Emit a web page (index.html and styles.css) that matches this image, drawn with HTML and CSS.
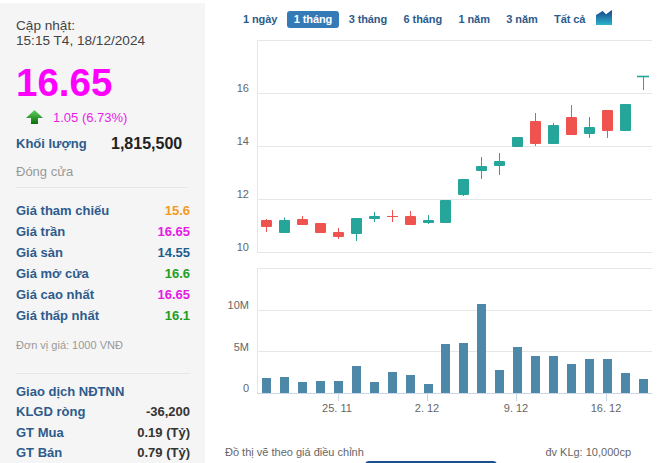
FILE: index.html
```html
<!DOCTYPE html>
<html lang="vi">
<head>
<meta charset="utf-8">
<title>16.65</title>
<link rel="stylesheet" href="styles.css">
</head>
<body>
<div class="page">
  <aside class="side">
    <div class="upd">Cập nhật:<br>15:15 T4, 18/12/2024</div>
    <div class="price">16.65</div>
    <div class="change">
      <svg class="arrow" width="17" height="14" viewBox="0 0 17 14">
        <defs>
          <linearGradient id="ga" x1="0" y1="0" x2="0" y2="1">
            <stop offset="0" stop-color="#5fd35f"/>
            <stop offset="1" stop-color="#0a6e0a"/>
          </linearGradient>
        </defs>
        <polygon points="8.5,0 17,8 12,8 12,14 5,14 5,8 0,8" fill="url(#ga)"/>
      </svg>
      <span>1.05 (6.73%)</span>
    </div>
    <div class="vol"><span class="lbl vol-lbl">Khối lượng</span><span class="vol-val">1,815,500</span></div>
    <div class="closed">Đóng cửa</div>
    <div class="sep sep1"></div>
    <ul class="rows">
      <li><span class="lbl">Giá tham chiếu</span><span class="v ref">15.6</span></li>
      <li><span class="lbl">Giá trần</span><span class="v ceil">16.65</span></li>
      <li><span class="lbl">Giá sàn</span><span class="v floor">14.55</span></li>
      <li><span class="lbl">Giá mở cửa</span><span class="v up">16.6</span></li>
      <li><span class="lbl">Giá cao nhất</span><span class="v ceil">16.65</span></li>
      <li><span class="lbl">Giá thấp nhất</span><span class="v up">16.1</span></li>
    </ul>
    <div class="unit">Đơn vị giá: 1000 VNĐ</div>
    <div class="sep sep2"></div>
    <ul class="rows rows2">
      <li><span class="lbl">Giao dịch NĐTNN</span></li>
      <li><span class="lbl">KLGD ròng</span><span class="v dark">-36,200</span></li>
      <li><span class="lbl">GT Mua</span><span class="v dark">0.19 (Tỷ)</span></li>
      <li><span class="lbl">GT Bán</span><span class="v dark">0.79 (Tỷ)</span></li>
    </ul>
  </aside>

  <main class="main">
    <nav class="tabs">
      <span class="tab">1 ngày</span>
      <span class="tab active">1 tháng</span>
      <span class="tab">3 tháng</span>
      <span class="tab">6 tháng</span>
      <span class="tab">1 năm</span>
      <span class="tab">3 năm</span>
      <span class="tab">Tất cả</span>
      <svg class="area-icon" width="16" height="15" viewBox="0 0 16 15">
        <defs>
          <linearGradient id="gi" x1="0" y1="0" x2="0" y2="1">
            <stop offset="0" stop-color="#1c3d88"/>
            <stop offset="0.35" stop-color="#1f6aa2"/>
            <stop offset="1" stop-color="#2bb6c9"/>
          </linearGradient>
        </defs>
        <polygon points="0,5 6.7,1 10,4.3 16,0 16,15 0,15" fill="url(#gi)"/>
      </svg>
    </nav>

    <svg class="chart" width="453" height="400" viewBox="205 38 453 400">
      <g class="grid">
        <line x1="257" y1="40.5" x2="652" y2="40.5"/>
        <line x1="257" y1="93.5" x2="652" y2="93.5"/>
        <line x1="257" y1="146.5" x2="652" y2="146.5"/>
        <line x1="257" y1="199.5" x2="652" y2="199.5"/>
        <line x1="257" y1="252.5" x2="652" y2="252.5"/>
        <line x1="257.5" y1="40" x2="257.5" y2="253"/>
        <line x1="257" y1="268.5" x2="652" y2="268.5"/>
        <line x1="257" y1="310.5" x2="652" y2="310.5"/>
        <line x1="257" y1="351.5" x2="652" y2="351.5"/>
        <line x1="257.5" y1="268" x2="257.5" y2="393"/>
      </g>
      <g class="axis">
        <line x1="257" y1="393.5" x2="652" y2="393.5"/>
        <line x1="338.5" y1="393" x2="338.5" y2="401"/>
        <line x1="427.5" y1="393" x2="427.5" y2="401"/>
        <line x1="516.5" y1="393" x2="516.5" y2="401"/>
        <line x1="606.5" y1="393" x2="606.5" y2="401"/>
      </g>
      <g class="ylab">
        <text x="249" y="91.5">16</text>
        <text x="249" y="144.5">14</text>
        <text x="249" y="197.5">12</text>
        <text x="249" y="250.5">10</text>
        <text x="249" y="309">10M</text>
        <text x="249" y="350.5">5M</text>
        <text x="249" y="392">0</text>
      </g>
      <g class="xlab">
        <text x="337" y="412">25. 11</text>
        <text x="427" y="412">2. 12</text>
        <text x="516" y="412">9. 12</text>
        <text x="606" y="412">16. 12</text>
      </g>

      <g class="dn">
        <line x1="266.5" y1="219" x2="266.5" y2="232"/><rect x="261" y="220" width="11" height="7" rx="1"/>
        <line x1="302.5" y1="216" x2="302.5" y2="225"/><rect x="297" y="219" width="11" height="6" rx="1"/>
        <rect x="315" y="223" width="11" height="10" rx="1"/>
        <line x1="338.5" y1="228" x2="338.5" y2="239"/><rect x="333" y="232" width="11" height="5" rx="1"/>
        <line x1="392.5" y1="210" x2="392.5" y2="222"/><line x1="387" y1="216.5" x2="398" y2="216.5"/>
        <line x1="410.5" y1="211" x2="410.5" y2="225"/><rect x="405" y="216" width="11" height="9" rx="1"/>
        <line x1="535.5" y1="113" x2="535.5" y2="146"/><rect x="530" y="121" width="11" height="23" rx="1"/>
        <line x1="571.5" y1="105" x2="571.5" y2="135"/><rect x="566" y="117" width="11" height="18" rx="1"/>
        <line x1="607.5" y1="110" x2="607.5" y2="138"/><rect x="602" y="110" width="11" height="21" rx="1"/>
      </g>
      <g class="upc">
        <line x1="284.5" y1="217.5" x2="284.5" y2="233"/><rect x="279" y="220" width="11" height="13" rx="1"/>
        <line x1="356.5" y1="218" x2="356.5" y2="241"/><rect x="351" y="218" width="11" height="16" rx="1"/>
        <line x1="374.5" y1="212" x2="374.5" y2="222"/><rect x="369" y="216" width="11" height="3" rx="1"/>
        <line x1="428.5" y1="215" x2="428.5" y2="224"/><rect x="423" y="220" width="11" height="3" rx="1"/>
        <rect x="440" y="200" width="11" height="23" rx="1"/>
        <line x1="463.5" y1="179" x2="463.5" y2="196"/><rect x="458" y="179" width="11" height="16" rx="1"/>
        <line x1="481.5" y1="157" x2="481.5" y2="179"/><rect x="476" y="166" width="11" height="5" rx="1"/>
        <line x1="499.5" y1="153" x2="499.5" y2="175"/><rect x="494" y="161" width="11" height="5" rx="1"/>
        <rect x="512" y="137" width="11" height="10" rx="1"/>
        <line x1="553.5" y1="123" x2="553.5" y2="144"/><rect x="548" y="125" width="11" height="19" rx="1"/>
        <line x1="589.5" y1="117" x2="589.5" y2="138"/><rect x="584" y="127" width="11" height="7" rx="1"/>
        <rect x="620" y="104" width="11" height="27" rx="1"/>
        <line x1="643.5" y1="77" x2="643.5" y2="90"/><line class="thick" x1="637" y1="76.5" x2="649" y2="76.5"/>
      </g>

      <g class="bars">
        <rect x="262" y="378" width="9" height="15"/>
        <rect x="280" y="377" width="9" height="16"/>
        <rect x="298" y="382" width="9" height="11"/>
        <rect x="316" y="381" width="9" height="12"/>
        <rect x="334" y="381" width="9" height="12"/>
        <rect x="352" y="366" width="9" height="27"/>
        <rect x="370" y="382" width="9" height="11"/>
        <rect x="388" y="372" width="9" height="21"/>
        <rect x="406" y="375" width="9" height="18"/>
        <rect x="424" y="384" width="9" height="9"/>
        <rect x="441" y="344" width="9" height="49"/>
        <rect x="459" y="343" width="9" height="50"/>
        <rect x="477" y="304" width="9" height="89"/>
        <rect x="495" y="370" width="9" height="23"/>
        <rect x="513" y="347" width="9" height="46"/>
        <rect x="531" y="356" width="9" height="37"/>
        <rect x="549" y="356" width="9" height="37"/>
        <rect x="567" y="364" width="9" height="29"/>
        <rect x="585" y="359" width="9" height="34"/>
        <rect x="603" y="359" width="9" height="34"/>
        <rect x="621" y="373" width="9" height="20"/>
        <rect x="639" y="379" width="9" height="14"/>
      </g>
    </svg>

    <div class="foot"><span>Đồ thị vẽ theo giá điều chỉnh</span><span>đv KLg: 10,000cp</span></div>
    <div class="btn"></div>
  </main>
</div>
</body>
</html>
```

FILE: styles.css
```css
html, body {
  margin: 0;
  padding: 0;
  background: #ffffff;
  width: 658px;
  height: 463px;
  overflow: hidden;
  font-family: "Liberation Sans", Arial, sans-serif;
}

.page {
  display: flex;
  height: 463px;
}

/* ---------- left panel ---------- */
.side {
  width: 205px;
  flex: none;
  box-sizing: border-box;
  margin-top: 3px;
  height: 460px;
  padding: 14.5px 15px 0 16px;
  background: #f5f5f5;
}

.upd {
  font-size: 13.6px;
  line-height: 15px;
  color: #444;
}

.price {
  margin-top: 13.5px;
  font-size: 38.5px;
  line-height: 44px;
  font-weight: bold;
  color: #ff00ff;
}

.change {
  margin-top: 4px;
  height: 16px;
  display: flex;
  align-items: center;
  padding-left: 10px;
  gap: 10px;
  font-size: 13px;
  color: #e81ee8;
}

.arrow {
  display: block;
}

.vol {
  margin-top: 10px;
  display: flex;
  align-items: center;
  line-height: 18px;
}

.vol-lbl {
  width: 95px;
}

.vol-val {
  font-size: 16px;
  font-weight: bold;
  color: #222;
}

.lbl {
  font-size: 13px;
  font-weight: bold;
  color: #2d5b8c;
}

.closed {
  margin-top: 11px;
  font-size: 13px;
  line-height: 16px;
  color: #999;
}

.sep {
  height: 1px;
  background: #e6e6e6;
}

.sep1 {
  margin-top: 6.5px;
  margin-right: 3px;
}

.rows {
  list-style: none;
  margin: 12.7px 0 0;
  padding: 0;
}

.rows li {
  display: flex;
  justify-content: space-between;
  align-items: center;
  height: 21px;
}

.v {
  font-size: 13px;
  font-weight: bold;
}

.ref { color: #f39a1e; }
.ceil { color: #e619e6; }
.floor { color: #1f5e8c; }
.up { color: #1f9e1f; }
.dark { color: #333; }

.unit {
  margin-top: 12.6px;
  font-size: 11px;
  line-height: 13px;
  color: #999;
}

.sep2 {
  margin-top: 21.7px;
}

.rows2 {
  margin-top: 6.5px;
}

.rows2 li {
  height: 20.5px;
}

/* ---------- right side ---------- */
.main {
  flex: 1;
  display: flex;
  flex-direction: column;
  min-width: 0;
}

.tabs {
  height: 38px;
  flex: none;
  display: flex;
  align-items: center;
  padding-left: 31px;
}

.tab {
  padding: 0 7px;
  margin-right: 2.5px;
  line-height: 17px;
  font-size: 11px;
  font-weight: bold;
  letter-spacing: -0.1px;
  color: #2d5b8c;
  border-radius: 3px;
  white-space: nowrap;
}

.tab.active {
  background: #337ab7;
  color: #fff;
}

.area-icon {
  display: block;
  margin-left: 1px;
  margin-top: -4px;
}

.chart {
  display: block;
  flex: none;
}

.grid line {
  stroke: #e6e6e6;
  stroke-width: 1;
}

.axis line {
  stroke: #ccd6eb;
  stroke-width: 1;
}

.ylab text,
.xlab text {
  font-family: "Liberation Sans", Arial, sans-serif;
  font-size: 11px;
  fill: #666;
}

.ylab text {
  text-anchor: end;
}

.xlab text {
  text-anchor: middle;
}

.dn rect { fill: #ef5350; }
.dn line { stroke: #ef5350; stroke-width: 1; }
.upc rect { fill: #26a69a; }
.upc line { stroke: #26a69a; stroke-width: 1; }
.upc line.thick { stroke-width: 1.6; }

.bars rect { fill: #4d88a9; }

.foot {
  margin-top: 8px;
  display: flex;
  justify-content: space-between;
  padding: 0 27px 0 20px;
  font-size: 11px;
  line-height: 13px;
  color: #666;
}

.btn {
  margin: 2px 0 0 160px;
  width: 132px;
  height: 20px;
  border-radius: 4px;
  background: #1f4e8c;
  flex: none;
}
```
